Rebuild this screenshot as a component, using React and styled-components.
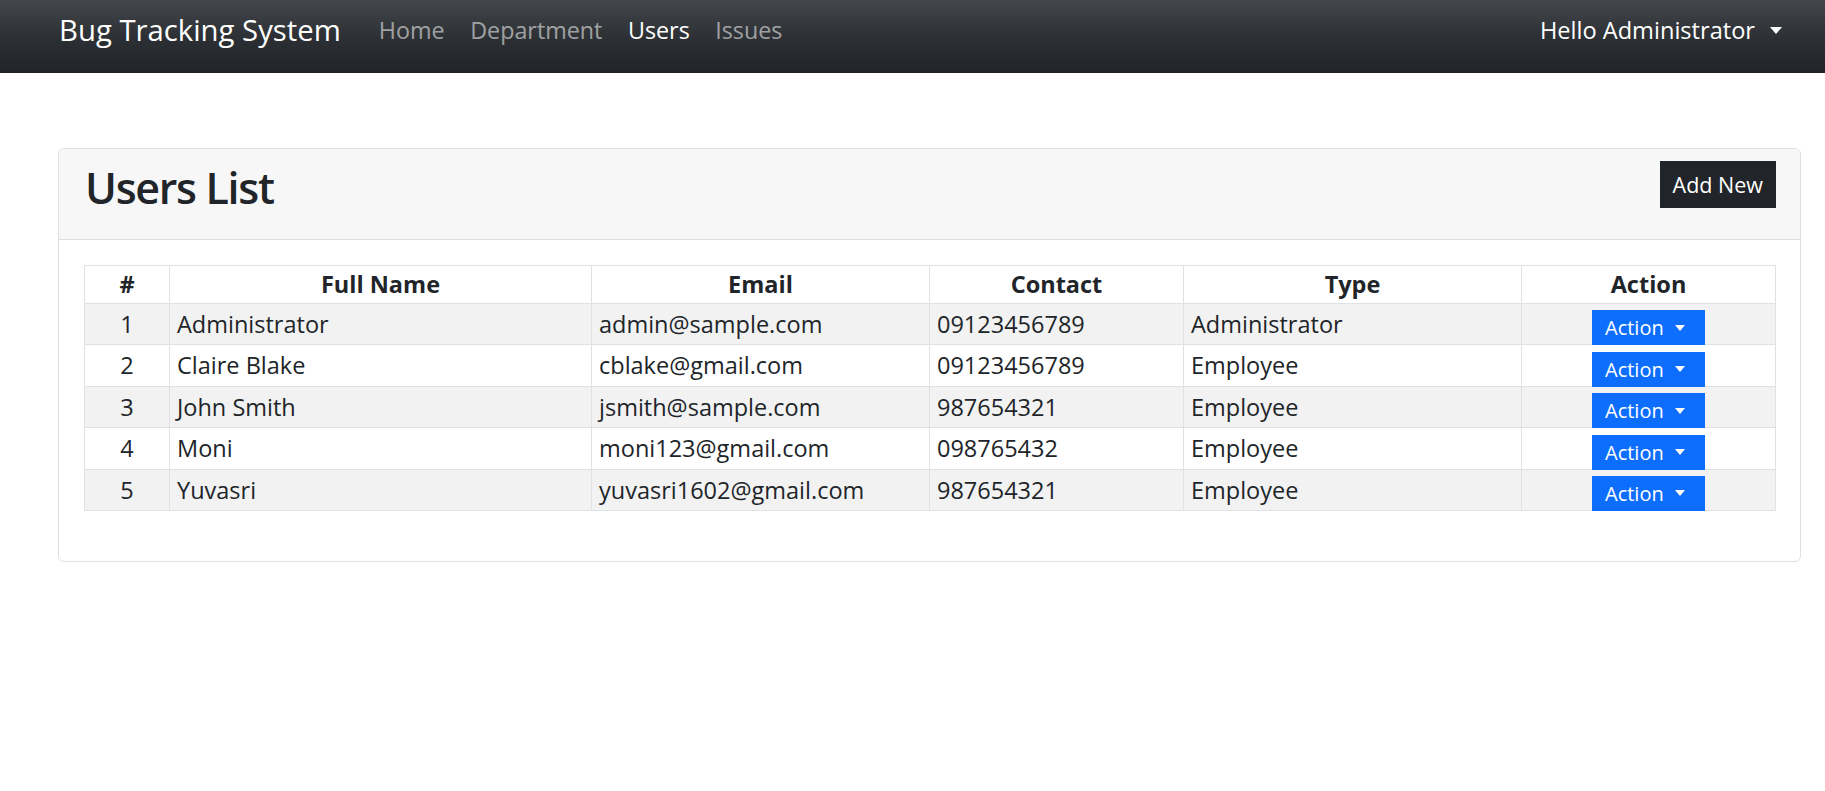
import React from 'react';
import styled, { createGlobalStyle } from 'styled-components';

const users = [
  { id: 1, name: 'Administrator', email: 'admin@sample.com', contact: '09123456789', type: 'Administrator' },
  { id: 2, name: 'Claire Blake', email: 'cblake@gmail.com', contact: '09123456789', type: 'Employee' },
  { id: 3, name: 'John Smith', email: 'jsmith@sample.com', contact: '987654321', type: 'Employee' },
  { id: 4, name: 'Moni', email: 'moni123@gmail.com', contact: '098765432', type: 'Employee' },
  { id: 5, name: 'Yuvasri', email: 'yuvasri1602@gmail.com', contact: '987654321', type: 'Employee' },
];

const columns = [
  { label: '#', width: 85 },
  { label: 'Full Name', width: 422 },
  { label: 'Email', width: 338 },
  { label: 'Contact', width: 254 },
  { label: 'Type', width: 338 },
  { label: 'Action', width: 254 },
];

const GlobalStyle = createGlobalStyle`
  * { box-sizing: border-box; }
  body {
    margin: 0;
    background: #fff;
    color: #212529;
    font-family: "Segoe UI", "Open Sans", "Noto Sans", sans-serif;
  }
`;

const Navbar = styled.nav`
  height: 73px;
  padding: 0 43px 12px 59px;
  display: flex;
  align-items: center;
  background: linear-gradient(180deg, #43474b 0%, #2b2f33 55%, #212529 100%);
`;

const Brand = styled.a`
  color: #fff;
  font-size: 29.3px;
  line-height: 1.2;
  margin-right: 38px;
`;

const NavLinks = styled.div`
  display: flex;
  gap: 25.5px;
`;

const NavLink = styled.a`
  font-size: 23.3px;
  line-height: 1.2;
  color: ${(p) => (p.$active ? '#fff' : 'rgba(255,255,255,0.55)')};
`;

const UserMenu = styled.div`
  margin-left: auto;
  display: flex;
  align-items: center;
  gap: 15px;
  color: #fff;
  font-size: 23.6px;
  line-height: 1.2;
`;

const Caret = styled.span`
  display: inline-block;
  width: 0;
  height: 0;
  border-top: ${(p) => p.$size}px solid #fff;
  border-left: ${(p) => p.$size * 0.9}px solid transparent;
  border-right: ${(p) => p.$size * 0.9}px solid transparent;
`;

const Card = styled.section`
  margin: 75px 24px 0 58px;
  border: 1px solid #dfdfdf;
  border-radius: 6px;
  overflow: hidden;
`;

const CardHeader = styled.header`
  height: 91px;
  padding: 12px 24px 0 26px;
  display: flex;
  align-items: flex-start;
  justify-content: space-between;
  background: #f7f7f7;
  border-bottom: 1px solid #dfdfdf;
`;

const Title = styled.h2`
  margin: 1px 0 0;
  font-size: 43px;
  font-weight: 600;
  letter-spacing: -1.3px;
  line-height: 1.2;
`;

const DarkButton = styled.button`
  height: 47px;
  padding: 0 13px;
  border: 0;
  border-radius: 0;
  background: #212529;
  color: #fff;
  font-family: inherit;
  font-size: 21.5px;
`;

const CardBody = styled.div`
  padding: 25px 25px 50px;
`;

const Table = styled.table`
  width: 100%;
  border-collapse: collapse;
  table-layout: fixed;
  font-size: 23.5px;
`;

const Th = styled.th`
  height: 38px;
  padding: 0 8px;
  border: 1px solid #dee2e6;
  font-weight: 700;
  text-align: center;
  line-height: 1.2;
  vertical-align: middle;
`;

const Row = styled.tr`
  background: ${(p) => (p.$striped ? '#f2f2f2' : '#fff')};
`;

const Td = styled.td`
  height: 41.4px;
  padding: 0 7px;
  border: 1px solid #dee2e6;
  line-height: 1.2;
  text-align: ${(p) => (p.$center ? 'center' : 'left')};
  vertical-align: ${(p) => (p.$bottom ? 'bottom' : 'middle')};
  white-space: nowrap;
`;

const ActionButton = styled.button`
  display: inline-flex;
  align-items: center;
  gap: 11px;
  height: 35px;
  width: 113px;
  padding: 0 13px;
  margin-bottom: -1px;
  border: 0;
  border-radius: 0;
  background: #0d6efd;
  color: #fff;
  font-family: inherit;
  font-size: 20px;
  vertical-align: bottom;
`;

export default function App() {
  return (
    <>
      <GlobalStyle />
      <Navbar>
        <Brand>Bug Tracking System</Brand>
        <NavLinks>
          <NavLink>Home</NavLink>
          <NavLink>Department</NavLink>
          <NavLink $active>Users</NavLink>
          <NavLink>Issues</NavLink>
        </NavLinks>
        <UserMenu>
          Hello Administrator
          <Caret $size={7} />
        </UserMenu>
      </Navbar>

      <Card>
        <CardHeader>
          <Title>Users List</Title>
          <DarkButton>Add New</DarkButton>
        </CardHeader>
        <CardBody>
          <Table>
            <colgroup>
              {columns.map((c) => (
                <col key={c.label} style={{ width: c.width }} />
              ))}
            </colgroup>
            <thead>
              <tr>
                {columns.map((c) => (
                  <Th key={c.label}>{c.label}</Th>
                ))}
              </tr>
            </thead>
            <tbody>
              {users.map((u, i) => (
                <Row key={u.id} $striped={i % 2 === 0}>
                  <Td $center>{u.id}</Td>
                  <Td>{u.name}</Td>
                  <Td>{u.email}</Td>
                  <Td>{u.contact}</Td>
                  <Td>{u.type}</Td>
                  <Td $center $bottom>
                    <ActionButton>
                      Action
                      <Caret $size={6} />
                    </ActionButton>
                  </Td>
                </Row>
              ))}
            </tbody>
          </Table>
        </CardBody>
      </Card>
    </>
  );
}
